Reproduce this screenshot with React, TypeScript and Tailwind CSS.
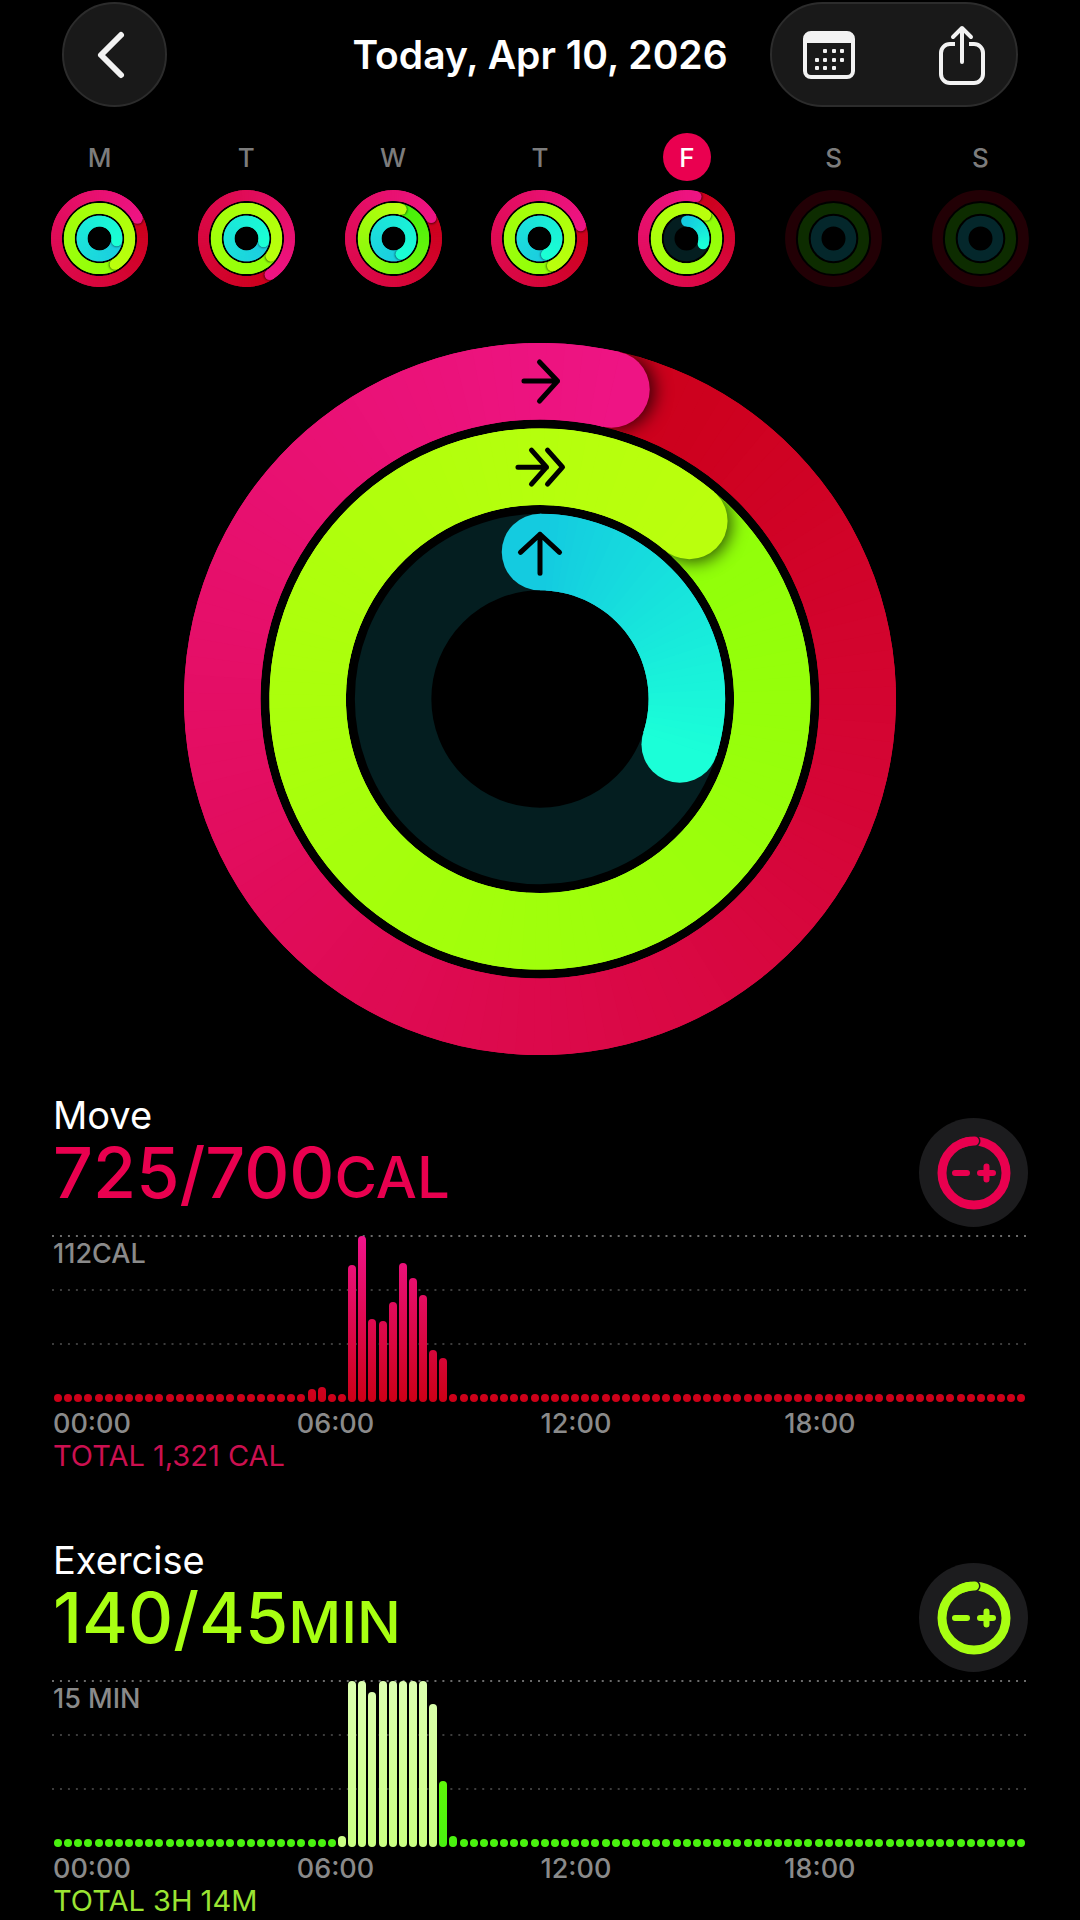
import { useId } from "react";

type RingSpec = { from: string; to: string; end: number; track?: string };
type Day = { label: string; active?: boolean; rings: RingSpec[] };

const move = (end: number): RingSpec => ({ from: "#cc001a", to: "#ee1484", end });
const exercise = (end: number, from = "#90ff0a"): RingSpec => ({ from, to: "#baff0d", end });
const stand = (end: number): RingSpec => ({ from: "#1ccbe0", to: "#1bffd4", end });
const standOpen: RingSpec = { from: "#14cbe0", to: "#1bffd8", end: 108, track: "#041e20" };
const empty: RingSpec[] = [
    { from: "", to: "", end: 0, track: "#220005" },
    { from: "", to: "", end: 0, track: "#0d2c00" },
    { from: "", to: "", end: 0, track: "#04272b" },
];

// end angles in degrees; 360 and more means the goal was closed
const week: Day[] = [
    { label: "M", rings: [move(422), exercise(509), stand(458)] },
    { label: "T", rings: [move(507), exercise(486), stand(461)] },
    { label: "W", rings: [move(421), exercise(375, "#44f00a"), stand(515)] },
    { label: "T", rings: [move(433), exercise(515), stand(517)] },
    { label: "F", active: true, rings: [move(373), exercise(400), standOpen] },
    { label: "S", rings: empty },
    { label: "S", rings: empty },
];

const mix = (a: string, b: string, t: number) => {
    const ch = (s: string, i: number) => parseInt(s.slice(1 + i * 2, 3 + i * 2), 16);
    return `rgb(${[0, 1, 2].map((i) => Math.round(ch(a, i) + (ch(b, i) - ch(a, i)) * t)).join(",")})`;
};

const point = (c: number, r: number, deg: number) => {
    const a = (deg * Math.PI) / 180;
    return [c + r * Math.sin(a), c - r * Math.cos(a)];
};

function Ring({ c, r, width, spec }: { c: number; r: number; width: number; spec: RingSpec }) {
    const id = useId();
    const { from, to, end, track } = spec;
    const closed = end >= 360;
    const start = closed ? end - 360 : 0;
    const step = 3;
    const slices: { a: number; color: string }[] = [];
    for (let a = start; a < end; a += step) {
        slices.push({ a, color: mix(from, to, (a - start) / (end - start)) });
    }
    // every slice runs a little under the next one, so no seam shows
    const arc = ({ a, color }: { a: number; color: string }) => {
        const [x1, y1] = point(c, r, a);
        const [x2, y2] = point(c, r, Math.min(a + step * 2, end));
        return <path key={a} d={`M${x1} ${y1}A${r} ${r} 0 0 1 ${x2} ${y2}`} stroke={color} strokeWidth={width} fill="none" />;
    };
    const tail = slices.filter((s) => s.a < end - 45);
    const head = slices.filter((s) => s.a >= end - 45);
    const [ex, ey] = point(c, r, end);
    const [sx, sy] = point(c, r, end + 1);

    return (
        <g>
            {track && <circle cx={c} cy={c} r={r} stroke={track} strokeWidth={width} fill="none" />}
            {closed && <circle cx={c} cy={c} r={r} stroke={mix(from, to, 0.5)} strokeWidth={width - 1} fill="none" />}
            {end > 0 && (
                <>
                    {!closed && <circle cx={c} cy={c - r} r={width / 2} fill={from} />}
                    {tail.map(arc)}
                    {closed && (
                        <>
                            <mask id={`${id}m`} maskUnits="userSpaceOnUse" x="0" y="0" width={c * 2} height={c * 2}>
                                <circle cx={c} cy={c} r={r} stroke="#fff" strokeWidth={width} fill="none" />
                            </mask>
                            <filter id={`${id}b`} x="-100%" y="-100%" width="300%" height="300%">
                                <feGaussianBlur stdDeviation={width / 9} />
                            </filter>
                            <g mask={`url(#${id}m)`}>
                                <circle cx={sx} cy={sy} r={width / 2} fill="#000" fillOpacity="0.7" filter={`url(#${id}b)`} />
                            </g>
                        </>
                    )}
                    <circle cx={ex} cy={ey} r={width / 2} fill={to} />
                    {head.map(arc)}
                </>
            )}
        </g>
    );
}

function MiniRings({ rings }: { rings: RingSpec[] }) {
    return (
        <svg viewBox="0 0 97 97" className="size-[97px]" aria-hidden="true">
            {rings.map((spec, i) => (
                <Ring key={i} c={48.5} r={43 - i * 12.8} width={10.8} spec={spec} />
            ))}
        </svg>
    );
}

function BigRings() {
    return (
        <svg viewBox="0 0 711 711" className="w-full max-w-[712px]" role="img" aria-label="Activity rings">
            {[move(373), exercise(400), standOpen].map((spec, i) => (
                <Ring key={i} c={355.5} r={317.3 - i * 85.3} width={76.4} spec={spec} />
            ))}
            <g stroke="#000" strokeWidth="5" strokeLinecap="round" strokeLinejoin="round" fill="none">
                <path d="M339.500 38H373M355 19l18 19-18 20" />
                <path d="M333.500 124H362M347 107l15 17-15 17M363 107l15 17-15 17" />
                <path d="M355.500 230V191M336 209l19.500-18L375 209" />
            </g>
        </svg>
    );
}

type Bar = { h: number; style?: string };
type Metric = {
    name: string;
    value: string;
    unit: string;
    scale: string;
    total: string;
    color: string;
    totalColor: string;
    barColor: string;
    bars: Record<number, Bar>;
};

const pale = "bg-[linear-gradient(to_top,#caff82,#dcffb0)]";
const bright = "bg-[linear-gradient(to_top,#48f20f,#80ff00)]";

const metrics: Metric[] = [
    {
        name: "Move",
        value: "725/700",
        unit: "CAL",
        scale: "112CAL",
        total: "TOTAL 1,321 CAL",
        color: "text-[#e9004f]",
        totalColor: "text-[#cb1050]",
        barColor: "bg-[linear-gradient(to_top,#cc0016,#f0148c)]",
        bars: {
            25: { h: 13 }, 26: { h: 15 }, 29: { h: 137 }, 30: { h: 166 }, 31: { h: 83 }, 32: { h: 81 },
            33: { h: 100 }, 34: { h: 139 }, 35: { h: 124 }, 36: { h: 107 }, 37: { h: 52 }, 38: { h: 44 },
        },
    },
    {
        name: "Exercise",
        value: "140/45",
        unit: "MIN",
        scale: "15 MIN",
        total: "TOTAL 3H 14M",
        color: "text-[#a8ff12]",
        totalColor: "text-[#9be433]",
        barColor: bright,
        bars: {
            28: { h: 11, style: pale }, 29: { h: 166, style: pale }, 30: { h: 166, style: pale },
            31: { h: 155, style: pale }, 32: { h: 166, style: pale }, 33: { h: 166, style: pale },
            34: { h: 166, style: pale }, 35: { h: 166, style: pale }, 36: { h: 166, style: pale },
            37: { h: 143, style: pale }, 38: { h: 66 }, 39: { h: 11 },
        },
    },
];

const hours = ["00:00", "06:00", "12:00", "18:00"];

function GoalIcon() {
    return (
        <svg viewBox="0 0 74 74" className="size-[74px]" fill="none" stroke="currentColor" aria-hidden="true">
            <circle cx="37" cy="37" r="32" strokeWidth="9" />
            <circle cx="37.500" cy="5" r="6" fill="#1c1c1e" stroke="none" />
            <path d="M23.500 8A32 32 0 0 1 37.500 5" strokeWidth="9" strokeLinecap="round" />
            <path d="M18 37h12M43 37h13M49.500 30.500v13" strokeWidth="6" strokeLinecap="round" />
        </svg>
    );
}

function GridLine({ className }: { className: string }) {
    return (
        <svg className={`h-[2px] w-full ${className}`} aria-hidden="true">
            <line x1="0" y1="1" x2="100%" y2="1" pathLength={489} strokeDasharray="1 3" stroke="currentColor" strokeWidth="2" />
        </svg>
    );
}

function MetricSection({ m }: { m: Metric }) {
    return (
        <section>
            <div className="flex items-start justify-between">
                <div className="pl-px">
                    <h2 className="text-[38px] leading-[48px] font-normal text-white">{m.name}</h2>
                    <p className={`text-[70px] leading-[68px] font-medium ${m.color}`}>
                        {m.value}
                        <span className="text-[58px]">{m.unit}</span>
                    </p>
                </div>
                <button
                    type="button"
                    aria-label={`Change ${m.name} goal`}
                    className={`mt-[27px] flex size-[109px] shrink-0 items-center justify-center rounded-full bg-[#1c1c1e] ${m.color}`}
                >
                    <GoalIcon />
                </button>
            </div>

            <div className="mt-2 grid h-[167px]">
                <div className="[grid-area:1/1] mr-[2px] flex flex-col gap-[52px]">
                    <GridLine className="text-[#6b6b6b]" />
                    <GridLine className="text-[#3c3c3c]" />
                    <GridLine className="text-[#3c3c3c]" />
                </div>
                <span className="[grid-area:1/1] mt-1 self-start pl-px text-[27px] leading-[30px] font-medium text-[#8a8a8a]">
                    {m.scale}
                </span>
                <div className="[grid-area:1/1] flex items-end justify-between px-[2px]">
                    {Array.from({ length: 96 }, (_, i) => (
                        <div
                            key={i}
                            className={`w-2 rounded-full bg-[length:100%_166px] bg-bottom bg-no-repeat ${m.bars[i]?.style ?? m.barColor}`}
                            style={{ height: m.bars[i]?.h ?? 8 }}
                        />
                    ))}
                </div>
            </div>

            <div className="mt-[7px] grid grid-cols-4 pl-px text-[27px] leading-[30px] font-medium text-[#8a8a8a]">
                {hours.map((h) => (
                    <span key={h}>{h}</span>
                ))}
            </div>
            <p className={`pl-px text-[29px] leading-[34px] ${m.totalColor}`}>{m.total}</p>
        </section>
    );
}

export default function App() {
    return (
        <div className="min-h-screen bg-black font-['Inter','Liberation_Sans',sans-serif]">
            <header className="grid grid-cols-[1fr_auto_1fr] items-center px-[62px] pt-[2px]">
                <button
                    type="button"
                    aria-label="Back"
                    className="flex size-[105px] items-center justify-center rounded-full border-2 border-[#2c2c2c] bg-[#191919]"
                >
                    <svg width="30" height="50" viewBox="0 0 30 50" fill="none" stroke="#f2f2f2" strokeWidth="6" strokeLinecap="round" strokeLinejoin="round" className="mr-2">
                        <path d="M25 5L5 25l20 20" />
                    </svg>
                </button>
                <h1 className="text-[39px] leading-[48px] font-semibold text-white">Today, Apr 10, 2026</h1>
                <div className="flex h-[105px] w-[248px] items-center justify-between justify-self-end rounded-full border-2 border-[#2c2c2c] bg-[#191919] px-[30px]">
                    <button type="button" aria-label="Calendar">
                        <svg width="54" height="50" viewBox="0 0 54 50" fill="none">
                            <rect x="3" y="3" width="48" height="44" rx="6" stroke="#f2f2f2" strokeWidth="4" />
                            <path d="M3 13V8a6 6 0 0 1 6-6h36a6 6 0 0 1 6 6v5z" fill="#f2f2f2" />
                            <g fill="#f2f2f2">
                                {[[21, 19], [30, 19], [38, 19], [13, 28], [21, 28], [30, 28], [38, 28], [13, 36], [21, 36], [30, 36]].map(([x, y]) => (
                                    <rect key={`${x}-${y}`} x={x} y={y} width="4" height="4" rx="1" />
                                ))}
                            </g>
                        </svg>
                    </button>
                    <button type="button" aria-label="Share">
                        <svg width="48" height="60" viewBox="0 0 48 60" fill="none" stroke="#f2f2f2" strokeWidth="4" strokeLinecap="round" strokeLinejoin="round">
                            <path d="M24 37V3M15 12l9-9 9 9" />
                            <path d="M17 19h-5a9 9 0 0 0-9 9v21a9 9 0 0 0 9 9h24a9 9 0 0 0 9-9V28a9 9 0 0 0-9-9h-5" strokeLinecap="butt" />
                        </svg>
                    </button>
                </div>
            </header>

            <nav className="mt-[26px] flex justify-between px-[51px]">
                {week.map((d, i) => (
                    <button key={i} type="button" className="flex flex-col items-center gap-[9px]">
                        <span
                            className={`flex size-12 items-center justify-center rounded-full text-[26px] font-medium ${
                                d.active ? "bg-[#ea0050] text-white" : "text-[#7c7c7c]"
                            }`}
                        >
                            {d.label}
                        </span>
                        <MiniRings rings={d.rings} />
                    </button>
                ))}
            </nav>

            <main className="px-[52px]">
                <div className="mt-14 flex justify-center">
                    <BigRings />
                </div>
                <div className="mt-9 flex flex-col gap-[63px]">
                    {metrics.map((m) => (
                        <MetricSection key={m.name} m={m} />
                    ))}
                </div>
            </main>
        </div>
    );
}
